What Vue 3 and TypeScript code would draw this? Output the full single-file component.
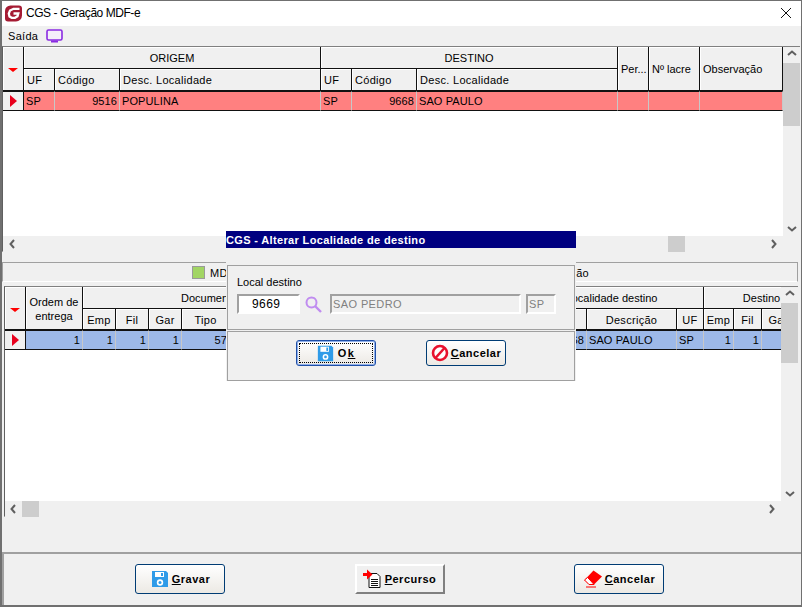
<template>
  <div class="window">
    <header class="titlebar">
      <svg class="logo" width="17" height="17" viewBox="0 0 17 17">
        <path d="M5.500 0.500h8.500a3 3 0 0 1 3 3v7a6 6 0 0 1-6 6H3a3 3 0 0 1-3-3V6a5.500 5.500 0 0 1 5.500-5.500z" fill="#a51b33" />
        <path d="M14.500 3.800H8.500L5 5.500 3.800 8.500l0.700 3 2.200 1.300H10l2.500-1.500 0.800-2.800H8.500" fill="none" stroke="#fff" stroke-width="2.300" />
      </svg>
      <span class="title">CGS - Geração MDF-e</span>
      <svg class="close" width="12" height="12" viewBox="0 0 12 12">
        <path d="M1 1l10 10M11 1L1 11" stroke="#111" stroke-width="1" />
      </svg>
    </header>

    <nav class="menubar">
      <span>Saída</span>
      <svg width="17" height="14" viewBox="0 0 17 14">
        <rect x="1" y="1" width="15" height="10" rx="1.500" fill="#f4effa" stroke="#8a2be2" stroke-width="1.600" />
        <path d="M5 12.500h7" stroke="#8a2be2" stroke-width="2" />
      </svg>
    </nav>

    <section class="panel-top">
      <div class="grid-row">
        <div class="grid-main">
          <div class="head head-top">
            <div class="cell corner" style="grid-row: span 2"><i class="sort" /></div>
            <div class="cell group" style="grid-column: span 3">ORIGEM</div>
            <div class="cell group" style="grid-column: span 3">DESTINO</div>
            <div class="cell side" style="grid-row: span 2">Per...</div>
            <div class="cell side" style="grid-row: span 2">Nº lacre</div>
            <div class="cell side" style="grid-row: span 2">Observação</div>
            <div v-for="c in topCols" :key="c.id" class="cell sub">{{ c.label }}</div>
          </div>
          <div class="data head-top row-red">
            <div class="dcell pointer"><i class="mark" /></div>
            <div v-for="(v, i) in topRow" :key="i" class="dcell" :class="{ num: i === 1 || i === 4 }">{{ v }}</div>
          </div>
        </div>
        <div class="vbar">
          <svg class="arrow" width="10" height="6" viewBox="0 0 10 6"><path d="M1 5l4-3.500L9 5" fill="none" stroke="#606060" stroke-width="2" /></svg>
          <i class="vthumb vthumb-top" />
          <svg class="arrow arrow-end" width="10" height="6" viewBox="0 0 10 6"><path d="M1 1l4 3.500L9 1" fill="none" stroke="#606060" stroke-width="2" /></svg>
        </div>
      </div>
      <div class="hbar hbar-top">
        <svg width="6" height="10" viewBox="0 0 6 10"><path d="M5 1L1.500 5 5 9" fill="none" stroke="#606060" stroke-width="2" /></svg>
        <i class="hthumb thumb-right" />
        <svg width="6" height="10" viewBox="0 0 6 10"><path d="M1 1l3.500 4L1 9" fill="none" stroke="#606060" stroke-width="2" /></svg>
      </div>
    </section>

    <div class="legend">
      <i class="swatch" /><span>MDF-e</span><span class="legend-end">Alteração</span>
    </div>

    <section class="panel-low">
      <div class="grid-row">
        <div class="grid-main">
          <div class="head head-low">
            <div class="cell corner" style="grid-row: span 2"><i class="sort" /></div>
            <div class="cell side center order" style="grid-row: span 2">Ordem de<br />entrega</div>
            <div class="cell group doc" style="grid-column: span 6">Documento</div>
            <div class="cell group" style="grid-column: span 3" />
            <div class="cell group" style="grid-column: span 3">Localidade destino</div>
            <div class="cell group" style="grid-column: span 4">Destino</div>
            <div v-for="c in lowCols" :key="c.id" class="cell sub center">{{ c.label }}</div>
          </div>
          <div class="data head-low row-blue">
            <div class="dcell pointer"><i class="mark" /></div>
            <div v-for="(v, i) in lowRow" :key="i" class="dcell" :class="{ num: i !== 11 && i !== 12 }">{{ v }}</div>
          </div>
        </div>
        <div class="vbar">
          <svg class="arrow" width="10" height="6" viewBox="0 0 10 6"><path d="M1 5l4-3.500L9 5" fill="none" stroke="#606060" stroke-width="2" /></svg>
          <i class="vthumb vthumb-low" />
          <svg class="arrow arrow-end" width="10" height="6" viewBox="0 0 10 6"><path d="M1 1l4 3.500L9 1" fill="none" stroke="#606060" stroke-width="2" /></svg>
        </div>
      </div>
      <div class="hbar hbar-low">
        <svg width="6" height="10" viewBox="0 0 6 10"><path d="M5 1L1.500 5 5 9" fill="none" stroke="#606060" stroke-width="2" /></svg>
        <i class="hthumb thumb-left" />
        <svg class="push" width="6" height="10" viewBox="0 0 6 10"><path d="M1 1l3.500 4L1 9" fill="none" stroke="#606060" stroke-width="2" /></svg>
      </div>
    </section>

    <footer class="footer">
      <button class="btn xp">
        <svg class="ico" width="20" height="20" viewBox="0 0 20 20">
          <path d="M2 2h14l2 2v14H2z" fill="#2f9be8" />
          <rect x="5" y="3" width="9" height="5" fill="#fff" />
          <rect x="11" y="4" width="2" height="3" fill="#2f9be8" />
          <circle cx="10" cy="13.500" r="3.200" fill="#fff" />
          <circle cx="10" cy="13.500" r="1.500" fill="#2f9be8" />
        </svg>
        <span><u>G</u>ravar</span>
      </button>
      <button class="btn classic">
        <svg class="ico" width="20" height="20" viewBox="0 0 20 20">
          <path d="M6 4.500h8l3 3v11H6z" fill="#fff" stroke="#111" />
          <path d="M8 10.500h7M8 12.500h7M8 14.500h7M8 16.500h7" stroke="#111" />
          <path d="M0 4h4V0.500L9.500 5.500 4 10.500V7H0z" fill="#f00" />
        </svg>
        <span><u>P</u>ercurso</span>
      </button>
      <button class="btn xp">
        <svg class="ico" width="20" height="20" viewBox="0 0 20 20">
          <path d="M10.500 1.500L19 7.500 11 15.500H6L1.500 11z" fill="#f00" />
          <path d="M1.500 11L6 15.500h5L7 11 4.500 8.500z" fill="#fff" stroke="#f00" />
          <path d="M3 18h10" stroke="#f00" stroke-width="1" />
        </svg>
        <span><u>C</u>ancelar</span>
      </button>
    </footer>

    <div class="dialog">
      <div class="dialog-title">CGS - Alterar Localidade de destino</div>
      <div class="dialog-fields">
        <label class="field-label">Local destino</label>
        <div class="field-row">
          <input class="code" value="9669" />
          <svg class="lupa" width="17" height="17" viewBox="0 0 17 17">
            <circle cx="6.500" cy="6.500" r="5" fill="none" stroke="#c08cf0" stroke-width="2" />
            <path d="M10 10l6 6" stroke="#c08cf0" stroke-width="2.400" />
          </svg>
          <input class="locked name" value="SAO PEDRO" disabled />
          <input class="locked uf" value="SP" disabled />
        </div>
      </div>
      <div class="dialog-actions">
        <button class="btn xp small focused">
          <svg class="ico" width="17" height="17" viewBox="0 0 20 20">
            <path d="M1 1h16l2 2v16H1z" fill="#2f9be8" />
            <rect x="4" y="2" width="10" height="6" fill="#fff" />
            <rect x="11" y="3" width="2" height="4" fill="#2f9be8" />
            <circle cx="10" cy="14" r="3.400" fill="#fff" />
            <circle cx="10" cy="14" r="1.600" fill="#2f9be8" />
          </svg>
          <span class="ok">O<u>k</u></span>
        </button>
        <button class="btn xp small">
          <svg class="ico" width="18" height="18" viewBox="0 0 18 18">
            <circle cx="9" cy="9" r="7" fill="#fff" stroke="#e8112d" stroke-width="2.600" />
            <path d="M4 4.500L14 13.500" stroke="#e8112d" stroke-width="2.600" transform="rotate(-90 9 9)" />
          </svg>
          <span><u>C</u>ancelar</span>
        </button>
      </div>
    </div>
  </div>
</template>

<script setup lang="ts">
interface Col {
  id: string
  label: string
}

const names = (list: string[]): Col[] => list.map((label, i) => ({ id: `${i}-${label}`, label }))

const topCols = names(['UF', 'Código', 'Desc. Localidade', 'UF', 'Código', 'Desc. Localidade'])
const topRow = ['SP', '9516', 'POPULINA', 'SP', '9668', 'SAO PAULO', '', '', '']

const lowCols = names(['Emp', 'Fil', 'Gar', 'Tipo', '', '', '', '', '', '', 'Descrição', 'UF', 'Emp', 'Fil', 'Gar', ''])
const lowRow = ['1', '1', '1', '1', '57', '', '', '', '', '', '9668', 'SAO PAULO', 'SP', '1', '1', '', '']
</script>

<style scoped>
* {
  box-sizing: border-box;
}

.window {
  position: relative;
  width: 802px;
  height: 607px;
  overflow: hidden;
  background: #f0f0f0;
  border: 1px solid #707070;
  border-left-width: 2px;
  border-bottom-width: 2px;
  font-family: "Liberation Sans", Arial, sans-serif;
  font-size: 11px;
  letter-spacing: 0.3px;
  color: #000;
}

.titlebar {
  display: flex;
  align-items: center;
  height: 25px;
  background: #fff;
  padding: 0 9px 2px 2px;
}
.logo {
  margin: 1px 4px 0 1px;
}
.title {
  font-size: 12px;
  letter-spacing: -0.45px;
}
.close {
  margin-left: auto;
}

.menubar {
  display: flex;
  align-items: center;
  gap: 8px;
  height: 20px;
  padding-left: 6px;
}

.panel-top {
  height: 206px;
  border-top: 1px solid #808080;
  border-left: 1px solid #606060;
  border-bottom: 1px solid #dcdcdc;
  margin-right: 1px;
}
.panel-low {
  height: 231px;
  margin: 4px 3px 0 2px;
  border-top: 1px solid #808080;
  border-left: 1px solid #606060;
  border-bottom: 1px solid #dcdcdc;
}

.grid-row {
  display: flex;
  background: #fff;
}
.panel-top .grid-row {
  height: 189px;
}
.panel-low .grid-row {
  height: 214px;
}
.grid-main {
  flex: 1;
  min-width: 0;
  overflow: hidden;
}

.head,
.data {
  display: grid;
}
.head-top {
  grid-template-columns: 21px 31px 65px 201px 31px 65px 201px 31px 51px 83px;
}
.head-low {
  grid-template-columns: 21px 57px 33px 33px 33px 48px 40px 67px 63px 100px 20px 67px 90px 27px 30px 28px 33px 25px;
  width: 815px;
}
.head-top .cell {
  height: 22px;
}
.head-low .group {
  height: 22px;
}
.head-low .sub {
  height: 21px;
}

.cell {
  display: flex;
  align-items: center;
  padding: 0 3px;
  padding-top: 1px;
  background: #f0f0f0;
  border-right: 1px solid #111;
  border-bottom: 1px solid #111;
  box-shadow: inset 1px 1px 0 #fff;
  white-space: nowrap;
  overflow: hidden;
}
.cell.side,
.cell.group {
  letter-spacing: 0;
}
.cell[style*="grid-row"] {
  height: 100%;
}
.corner {
  justify-content: center;
}
.group {
  justify-content: center;
}
.doc {
  justify-content: flex-start;
  padding-left: 98px;
}
.center {
  justify-content: center;
  text-align: center;
}
.order {
  line-height: 14px;
}

.sort {
  display: block;
  width: 0;
  height: 0;
  margin-top: 2px;
  border-left: 5px solid transparent;
  border-right: 5px solid transparent;
  border-top: 4px solid #f00;
}
.mark {
  display: block;
  width: 0;
  height: 0;
  border-top: 6px solid transparent;
  border-bottom: 6px solid transparent;
  border-left: 7px solid #e8001c;
}

.data {
  height: 20px;
}
.data .dcell {
  height: 20px;
  display: flex;
  align-items: center;
  padding: 0 2px;
  border-right: 1px solid #c8c8c8;
  border-top: 1px solid #111;
  border-bottom: 1px solid #111;
  white-space: nowrap;
  overflow: hidden;
  letter-spacing: 0.1px;
}
.dcell.num {
  justify-content: flex-end;
}
.dcell.pointer {
  justify-content: center;
  background: #f0f0f0;
  border-right: 1px solid #111;
}
.row-red .dcell:not(.pointer) {
  background: #ff8080;
}
.row-blue .dcell:not(.pointer) {
  background: #9db9e8;
}

.vbar {
  position: relative;
  flex: none;
  display: flex;
  flex-direction: column;
  align-items: center;
  width: 17px;
  background: #f0f0f0;
  padding-top: 3px;
}
.arrow {
  flex: none;
}
.arrow-end {
  margin-top: auto;
  margin-bottom: 4px;
}
.vthumb {
  display: block;
  width: 17px;
  background: #cdcdcd;
}
.vthumb-top {
  height: 63px;
  margin-top: 7px;
}
.vthumb-low {
  height: 60px;
  margin-top: 7px;
}

.hbar {
  display: flex;
  align-items: center;
  height: 16px;
  background: #f0f0f0;
}
.hbar-top {
  padding: 0 23px 0 6px;
  justify-content: flex-start;
}
.hbar-low {
  padding-left: 5px;
  padding-right: 23px;
}
.hthumb {
  display: block;
  height: 16px;
  width: 17px;
  background: #cdcdcd;
}
.thumb-right {
  margin-left: 653px;
  margin-right: auto;
}
.thumb-left {
  margin-left: 6px;
}
.push {
  margin-left: auto;
}

.legend {
  display: flex;
  align-items: center;
  height: 20px;
  margin: 10px 3px 0 0;
  padding-left: 189px;
  border-top: 1px solid #a0a0a0;
  border-left: 1px solid #a0a0a0;
  border-right: 1px solid #a0a0a0;
  border-bottom: 1px solid #fff;
}
.legend span {
  padding-top: 1px;
}
.swatch {
  display: block;
  width: 13px;
  height: 13px;
  margin-right: 5px;
  background: #a2d564;
  border: 1px solid #9a9a9a;
}
.legend-end {
  margin-left: auto;
  margin-right: 208px;
}

.footer {
  display: flex;
  align-items: flex-start;
  justify-content: space-between;
  height: 54px;
  margin: 35px 0 0 0;
  padding: 10px 137px 0 131px;
  border-top: 2px solid #a0a0a0;
  border-left: 2px solid #a0a0a0;
}

.btn {
  display: flex;
  align-items: center;
  justify-content: center;
  gap: 2px;
  width: 90px;
  height: 30px;
  padding: 0;
  font-family: "Liberation Sans", Arial, sans-serif;
  font-size: 11px;
  font-weight: 700;
  letter-spacing: 0.5px;
  color: #000;
}
.btn.xp {
  background: linear-gradient(#ffffff, #ece9e4);
  border: 1px solid #003c74;
  border-radius: 3px;
}
.btn.classic {
  background: #f0f0f0;
  border: 2px solid;
  border-color: #fff #808080 #808080 #fff;
}
.btn.small {
  width: 80px;
  height: 26px;
}
.btn.focused {
  border-color: #1f4fa8;
  box-shadow: inset 0 0 0 1px #8fb0ea;
  outline: 1px dotted #000;
  outline-offset: -4px;
}
.ok {
  margin-left: 2px;
  letter-spacing: 1.5px;
}

.dialog {
  position: absolute;
  left: 224px;
  top: 230px;
  width: 350px;
  height: 150px;
  background: #f0f0f0;
}
.dialog-title {
  height: 17px;
  line-height: 18px;
  background: #000080;
  color: #fff;
  font-weight: 700;
  white-space: nowrap;
  letter-spacing: 0.35px;
}
.dialog-fields {
  height: 65px;
  margin: 17px 1px 0;
  padding: 9px 9px 0;
  border: 1px solid #a0a0a0;
}
.field-label {
  display: block;
  height: 19px;
  line-height: 14px;
  letter-spacing: 0;
}
.field-row {
  display: flex;
  align-items: center;
}
input {
  height: 20px;
  margin: 0;
  padding: 0 1px;
  font-family: "Liberation Sans", Arial, sans-serif;
  font-size: 11px;
  letter-spacing: 0.4px;
  border: 2px solid;
  border-color: #a0a0a0 #fff #fff #a0a0a0;
}
.code {
  width: 63px;
  padding-left: 13px;
  background: #fff;
  color: #000;
  outline: none;
  font-size: 12px;
}
.lupa {
  margin: 0 8px 0 5px;
}
.locked {
  background: #f0f0f0;
  color: #808080;
}
.name {
  width: 191px;
  margin-right: 5px;
}
.uf {
  width: 30px;
}
.dialog-actions {
  display: flex;
  justify-content: center;
  gap: 50px;
  height: 50px;
  margin: 1px 1px 0;
  padding-top: 8px;
  border: 1px solid #a0a0a0;
}
u {
  text-decoration: underline;
}
</style>

<style>
html,
body {
  margin: 0;
  background: #fff;
}
</style>
